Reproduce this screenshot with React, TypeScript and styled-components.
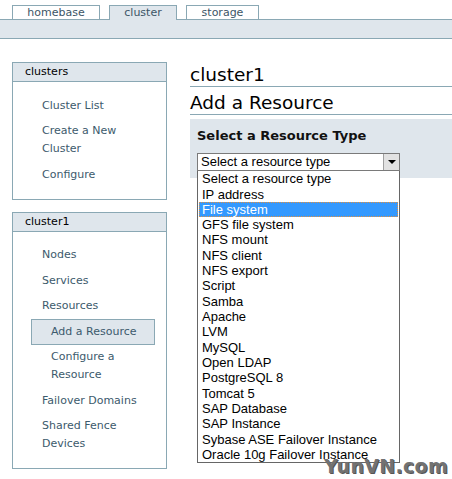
import React from "react";
import styled, { createGlobalStyle } from "styled-components";

const Global = createGlobalStyle`
  html, body { margin: 0; padding: 0; background: #ffffff; }
  body { font-family: "DejaVu Sans", Verdana, sans-serif; }
  * { box-sizing: border-box; }
`;

const Page = styled.div`
  position: relative;
  width: 452px;
  height: 479px;
  overflow: hidden;
`;

const TabRow = styled.div`
  display: flex;
  align-items: flex-end;
  gap: 9px;
  padding: 5px 0 0 12px;
  height: 19px;
`;

const Tab = styled.div<{ $active?: boolean; $w: number }>`
  position: relative;
  z-index: 1;
  width: ${(p) => p.$w}px;
  height: ${(p) => (p.$active ? 15 : 14)}px;
  margin-bottom: ${(p) => (p.$active ? -1 : 0)}px;
  border: 1px solid #8aa8b4;
  border-bottom: none;
  background: ${(p) => (p.$active ? "#dfe6ec" : "#ffffff")};
  color: #3c5566;
  font-size: 11px;
  line-height: 13px;
  text-align: center;
`;

const Bar = styled.div`
  height: 20px;
  background: #dfe6ec;
  border-top: 1px solid #8aa8b4;
  border-bottom: 1px solid #8aa8b4;
`;

const Body = styled.div`
  display: grid;
  grid-template-columns: 155px 1fr;
  column-gap: 23px;
  padding: 23px 0 0 12px;
`;

const Sidebar = styled.div`
  display: flex;
  flex-direction: column;
  gap: 12px;
`;

const Box = styled.div`
  border: 1px solid #8aa8b4;
`;

const BoxHeader = styled.div`
  height: 19px;
  background: #dfe6ec;
  border-bottom: 1px solid #8aa8b4;
  padding-left: 12px;
  font-size: 11px;
  line-height: 18px;
  color: #000;
`;

const NavList = styled.div`
  padding: 11px 0 11px 0;
  display: flex;
  flex-direction: column;
`;

const NavItem = styled.div<{ $sub?: boolean; $active?: boolean }>`
  font-size: 11px;
  line-height: 18px;
  padding: 2.75px 0 2.75px ${(p) => (p.$sub ? 19 : 28)}px;
  margin-left: ${(p) => (p.$sub ? 18 : 0)}px;
  width: ${(p) => (p.$sub ? "124px" : "auto")};
  border: 1px solid ${(p) => (p.$active ? "#8aa8b4" : "transparent")};
  background: ${(p) => (p.$active ? "#dfe6ec" : "transparent")};
  color: #3c5a6c;
`;

const Main = styled.div`
  display: flex;
  flex-direction: column;
`;

const Title = styled.div<{ $top: number }>`
  margin-top: ${(p) => p.$top}px;
  font-size: 18.5px;
  line-height: 22px;
  color: #000;
  border-bottom: 1px solid #8aa8b4;
`;

const Panel = styled.div`
  margin-top: 4px;
  height: 59px;
  background: #dfe6ec;
  padding: 9px 0 0 7px;
`;

const PanelHeading = styled.div`
  font-size: 13px;
  font-weight: bold;
  line-height: 16px;
  color: #111;
`;

const SelectWrap = styled.div`
  position: relative;
  margin-top: 9px;
  width: 203px;
  font-family: "Liberation Sans", Arial, sans-serif;
  font-size: 13px;
`;

const SelectBox = styled.div`
  display: flex;
  height: 18px;
  border: 1px solid #7a7a7a;
  background: #fff;
`;

const SelectText = styled.div`
  flex: 1;
  padding-left: 3px;
  line-height: 16px;
  color: #000;
`;

const SelectButton = styled.div`
  width: 16px;
  height: 16px;
  background: #e2e2e2;
  border-left: 1px solid #a0a0a0;
  display: flex;
  align-items: center;
  justify-content: center;
`;

const Arrow = styled.div`
  width: 0;
  height: 0;
  border-left: 4px solid transparent;
  border-right: 4px solid transparent;
  border-top: 4px solid #000;
`;

const Options = styled.div`
  position: absolute;
  top: 18px;
  left: 0;
  width: 203px;
  border: 1px solid #666;
  border-top: none;
  background: #fff;
  padding: 0 1px;
`;

const Option = styled.div<{ $sel?: boolean }>`
  height: 15.33px;
  line-height: 15px;
  padding-left: 2px;
  color: ${(p) => (p.$sel ? "#fff" : "#000")};
  background: ${(p) => (p.$sel ? "#3399ff" : "transparent")};
  border: 1px dotted ${(p) => (p.$sel ? "#e09040" : "transparent")};
  display: flex;
  align-items: center;
`;

const Watermark = styled.div`
  position: absolute;
  right: 4px;
  bottom: 1px;
  font-family: "DejaVu Sans", sans-serif;
  font-weight: bold;
  font-size: 19px;
  line-height: 24px;
  color: #727272;
  text-shadow: 1px 1px 0 #555;
  letter-spacing: 0.3px;
`;

const options = [
  "Select a resource type",
  "IP address",
  "File system",
  "GFS file system",
  "NFS mount",
  "NFS client",
  "NFS export",
  "Script",
  "Samba",
  "Apache",
  "LVM",
  "MySQL",
  "Open LDAP",
  "PostgreSQL 8",
  "Tomcat 5",
  "SAP Database",
  "SAP Instance",
  "Sybase ASE Failover Instance",
  "Oracle 10g Failover Instance",
];

export default function App() {
  return (
    <Page>
      <Global />
      <TabRow>
        <Tab $w={88}>homebase</Tab>
        <Tab $w={68} $active>
          cluster
        </Tab>
        <Tab $w={73}>storage</Tab>
      </TabRow>
      <Bar />
      <Body>
        <Sidebar>
          <Box>
            <BoxHeader>clusters</BoxHeader>
            <NavList>
              <NavItem>Cluster List</NavItem>
              <NavItem>
                Create a New
                <br />
                Cluster
              </NavItem>
              <NavItem>Configure</NavItem>
            </NavList>
          </Box>
          <Box>
            <BoxHeader>cluster1</BoxHeader>
            <NavList>
              <NavItem>Nodes</NavItem>
              <NavItem>Services</NavItem>
              <NavItem>Resources</NavItem>
              <NavItem $sub $active>
                Add a Resource
              </NavItem>
              <NavItem $sub>
                Configure a
                <br />
                Resource
              </NavItem>
              <NavItem>Failover Domains</NavItem>
              <NavItem>
                Shared Fence
                <br />
                Devices
              </NavItem>
            </NavList>
          </Box>
        </Sidebar>
        <Main>
          <Title $top={2}>cluster1</Title>
          <Title $top={5}>Add a Resource</Title>
          <Panel>
            <PanelHeading>Select a Resource Type</PanelHeading>
            <SelectWrap>
              <SelectBox>
                <SelectText>Select a resource type</SelectText>
                <SelectButton>
                  <Arrow />
                </SelectButton>
              </SelectBox>
              <Options>
                {options.map((o, i) => (
                  <Option key={o} $sel={i === 2}>
                    {o}
                  </Option>
                ))}
              </Options>
            </SelectWrap>
          </Panel>
        </Main>
      </Body>
      <Watermark>YunVN.com</Watermark>
    </Page>
  );
}
